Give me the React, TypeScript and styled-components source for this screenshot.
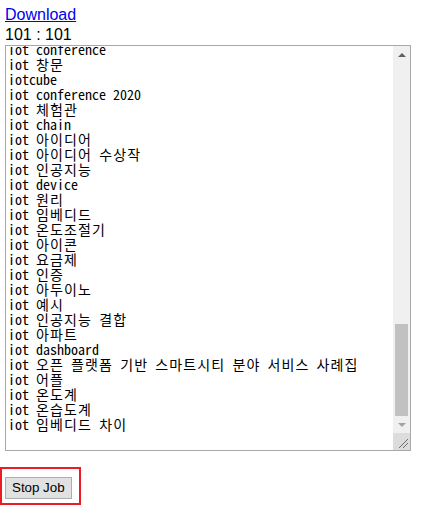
import React from "react";
import styled, { createGlobalStyle } from "styled-components";

const GlobalStyle = createGlobalStyle`
  html, body {
    margin: 0;
    padding: 0;
    background: #ffffff;
  }
  body {
    font-family: "Liberation Sans", Arial, sans-serif;
    font-size: 16px;
    color: #000000;
  }
`;

const Page = styled.div`
  display: flex;
  flex-direction: column;
  align-items: flex-start;
  padding: 4px 0 0 5px;
`;

const DownloadLink = styled.a`
  display: block;
  line-height: 21px;
  color: #0000ee;
  text-decoration: underline;
`;

const Counter = styled.div`
  line-height: 20px;
`;

const TextBox = styled.div`
  display: grid;
  grid-template-columns: 1fr 17px;
  width: 406px;
  height: 406px;
  box-sizing: border-box;
  border: 1px solid #a9a9a9;
  background: #ffffff;
`;

const Viewport = styled.div`
  overflow: hidden;
  padding: 0 2px;
`;

const Lines = styled.div`
  margin-top: -4px;
  font-family: "Noto Sans Mono CJK KR", "Noto Sans CJK KR", "Liberation Mono", monospace;
  font-size: 14px;
  line-height: 15px;
  white-space: pre;
`;

const Line = styled.div`
  height: 15px;
`;

// hangul runs are drawn a little wider, like the full-width cells in the reference
const Hangul = styled.span`
  letter-spacing: 1.15px;
`;

const ScrollBar = styled.div`
  display: flex;
  flex-direction: column;
  background: #f0f0f0;
`;

const ArrowButton = styled.div<{ $dir: "up" | "down"; $disabled?: boolean }>`
  height: 17px;
  flex: none;
  display: flex;
  align-items: center;
  justify-content: center;

  &::before {
    content: "";
    width: 0;
    height: 0;
    border-left: 4px solid transparent;
    border-right: 4px solid transparent;
    ${(p) =>
      p.$dir === "up"
        ? `border-bottom: 4px solid ${p.$disabled ? "#a3a3a3" : "#606060"};`
        : `border-top: 4px solid ${p.$disabled ? "#a3a3a3" : "#606060"};`}
  }
`;

const Track = styled.div`
  flex: 1;
  display: flex;
  flex-direction: column;
  justify-content: flex-end;
  padding: 0 2px;
`;

const Thumb = styled.div`
  background: #c1c1c1;
`;

const Corner = styled.div`
  height: 17px;
  flex: none;
  background: #dcdcdc;
  display: flex;
  align-items: flex-end;
  justify-content: flex-end;
`;

const ActionBox = styled.div`
  margin: 16px 0 0 -5px;
  padding: 8px 7px 4px 3px;
  border: 2px solid #ed1c24;
  line-height: 0;
`;

const StopButton = styled.button`
  font-family: "Liberation Sans", Arial, sans-serif;
  font-size: 13.33px;
  line-height: 18px;
  height: 22px;
  padding: 1px 6px;
  color: #000000;
  background: #e1e1e1;
  border: 1px solid #adadad;
  border-radius: 0;
  margin: 0;
`;

const lines = [
  "iot conference",
  "iot 창문",
  "iotcube",
  "iot conference 2020",
  "iot 체험관",
  "iot chain",
  "iot 아이디어",
  "iot 아이디어 수상작",
  "iot 인공지능",
  "iot device",
  "iot 원리",
  "iot 임베디드",
  "iot 온도조절기",
  "iot 아이콘",
  "iot 요금제",
  "iot 인증",
  "iot 아두이노",
  "iot 예시",
  "iot 인공지능 결합",
  "iot 아파트",
  "iot dashboard",
  "iot 오픈 플랫폼 기반 스마트시티 분야 서비스 사례집",
  "iot 어플",
  "iot 온도계",
  "iot 온습도계",
  "iot 임베디드 차이",
  "",
];

// total 101 lines, visible ~27
const visibleRatio = 0.262;

const renderLine = (text: string) =>
  text.split(/([\uAC00-\uD7A3]+)/).map((part, i) =>
    /[\uAC00-\uD7A3]/.test(part) ? <Hangul key={i}>{part}</Hangul> : part
  );

const App = () => {
  const trackLength = 352;
  return (
    <>
      <GlobalStyle />
      <Page>
        <DownloadLink href="#">Download</DownloadLink>
        <Counter>101 : 101</Counter>
        <TextBox>
          <Viewport>
            <Lines>
              {lines.map((l, i) => (
                <Line key={i}>{renderLine(l)}</Line>
              ))}
            </Lines>
          </Viewport>
          <ScrollBar>
            <ArrowButton $dir="up" />
            <Track>
              <Thumb style={{ height: Math.round(trackLength * visibleRatio) }} />
            </Track>
            <ArrowButton $dir="down" $disabled />
            <Corner>
              <svg width="17" height="17" viewBox="0 0 17 17">
                <line x1="6" y1="15" x2="15" y2="6" stroke="#6d6d6d" strokeWidth="1" />
                <line x1="10" y1="15" x2="15" y2="10" stroke="#6d6d6d" strokeWidth="1" />
              </svg>
            </Corner>
          </ScrollBar>
        </TextBox>
        <ActionBox>
          <StopButton>Stop Job</StopButton>
        </ActionBox>
      </Page>
    </>
  );
};

export default App;
